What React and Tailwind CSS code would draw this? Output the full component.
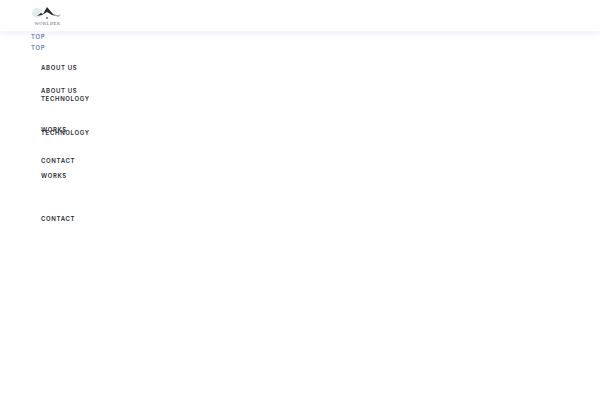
const links = ['ABOUT US', 'TECHNOLOGY', 'WORKS', 'CONTACT']

const NavList = ({ top, topGap, gap }) => (
  <ul className={`col-start-1 row-start-1 flex flex-col ${top}`}>
    <li className={`h-[10px] leading-[10px] text-[#6c7eb8] ${topGap}`}>TOP</li>
    {links.map((l) => (
      <li key={l} className={`h-[10px] leading-[10px] pl-[10px] text-[#2a2a32] ${gap}`}>{l}</li>
    ))}
  </ul>
)

export default function App() {
  return (
    <div className="w-[600px] h-[400px] bg-white overflow-hidden font-['Inter',sans-serif] text-[6px] font-semibold tracking-[0.11em]">
      <header className="h-[31px] pl-[31px] bg-white shadow-[0_1px_8px_rgba(120,120,210,0.16)] flex items-start">
        <div className="w-[31px] pt-[6px] flex flex-col items-center">
          <svg width="31" height="15" viewBox="0 0 31 15">
            <circle cx="6" cy="7" r="5" fill="#e0ecef" />
            <path d="M6 10 L10 7 L12 8 L16 1 L22 8 L26 10 L21 9 L16 6 L11 9 Z" fill="#2b2d35" />
            <path d="M24 9 L27 11 L30 8 L27 9.5 Z" fill="#8a8d96" />
            <circle cx="16" cy="12" r="1" fill="#6a6d75" />
          </svg>
          <span className="pl-[2px] font-['Liberation_Serif',serif] text-[4.5px] leading-[5px] font-normal tracking-[0.12em] text-[#5a5c65]">WORLDER</span>
        </div>
      </header>
      <nav className="grid pl-[31px] pt-[0.5px] justify-start">
        <NavList top="pt-0" topGap="mb-[21px]" gap="mb-[21px]" />
        <NavList top="pt-[11px]" topGap="mb-[33px]" gap="mb-[32.75px]" />
      </nav>
    </div>
  )
}
